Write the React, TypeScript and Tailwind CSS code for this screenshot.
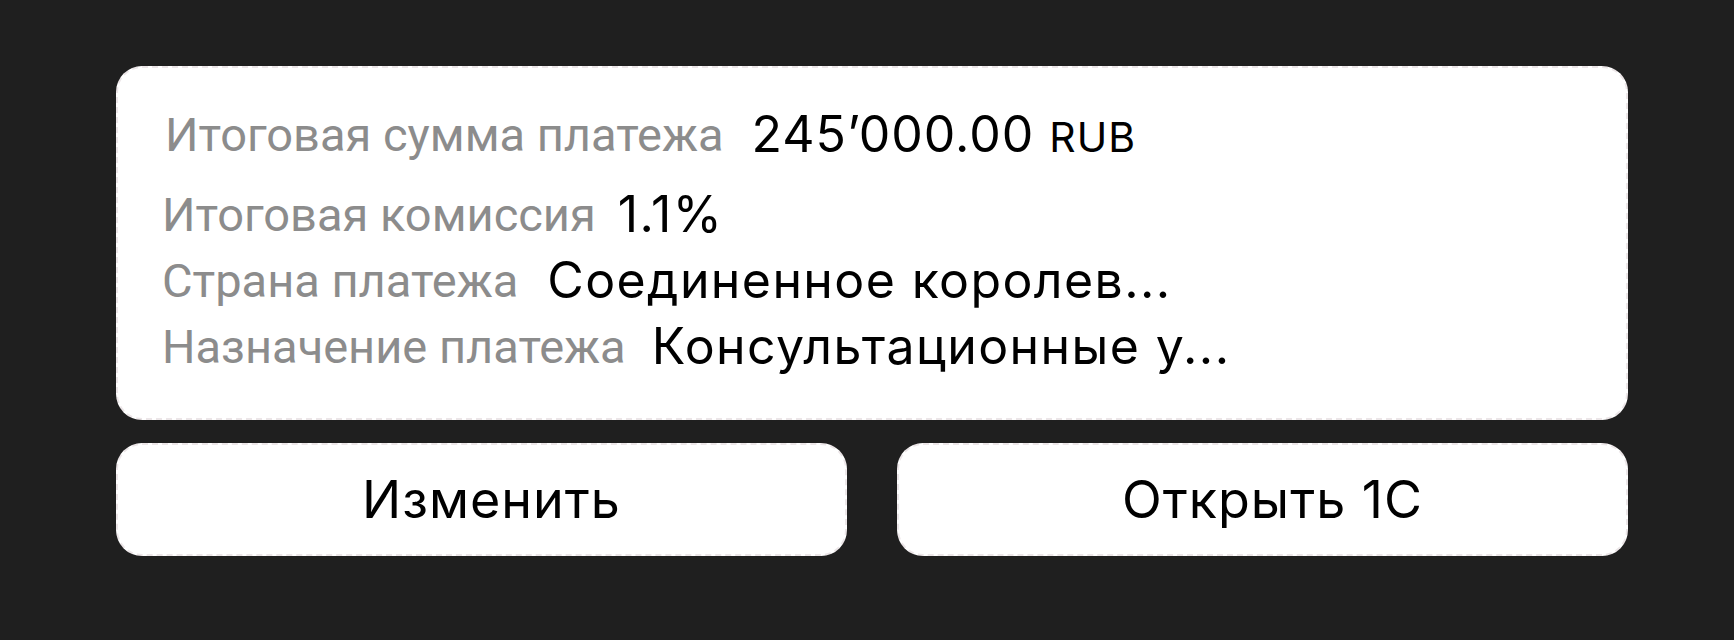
import React from 'react';

const rows = [
  { label: 'Итоговая комиссия', value: '1.1%', gap: 'gap-[22px]' },
  { label: 'Страна платежа', value: 'Соединенное королев...', gap: 'gap-[29px]' },
  { label: 'Назначение платежа', value: 'Консультационные у...', gap: 'gap-[26px]' },
];

const labelCls = "text-[47px] leading-none text-[#8c8c8c] font-['Roboto',sans-serif]";
const valueCls = "text-[50px] leading-none tracking-[1.4px] text-black font-['Inter',sans-serif]";

const App: React.FC = () => {
  return (
    <div className="w-full h-[640px] bg-[#1f1f1f] pt-[66px] pl-[116px]">
      <div className="w-[1512px] flex flex-col gap-[23px]">
        <div className="h-[354px] bg-white rounded-[26px] border-2 border-dashed border-[#ece6e8] pl-[44px] pt-[35px] flex flex-col">
          <div className="h-[62px] flex items-center gap-[28px] pl-[3px]">
            <span className={labelCls}>Итоговая сумма платежа</span>
            <span className="text-[50px] leading-none tracking-[1px] text-black font-['Inter',sans-serif]">
              245’000.00 <span className="text-[41px] tracking-[1px]">RUB</span>
            </span>
          </div>
          <div className="mt-[16px] flex flex-col">
            {rows.map((r) => (
              <div key={r.label} className={`h-[66px] flex items-center ${r.gap}`}>
                <span className={labelCls}>{r.label}</span>
                <span className={valueCls}>{r.value}</span>
              </div>
            ))}
          </div>
        </div>
        <div className="flex gap-[50px]">
          {['Изменить', 'Открыть 1С'].map((t) => (
            <button
              key={t}
              className="flex-1 h-[113px] bg-white rounded-[26px] border-2 border-dashed border-[#ece6e8] pl-[20px] flex items-center justify-center text-[52px] tracking-[1px] text-black font-['Inter',sans-serif]"
            >
              {t}
            </button>
          ))}
        </div>
      </div>
    </div>
  );
};

export default App;
